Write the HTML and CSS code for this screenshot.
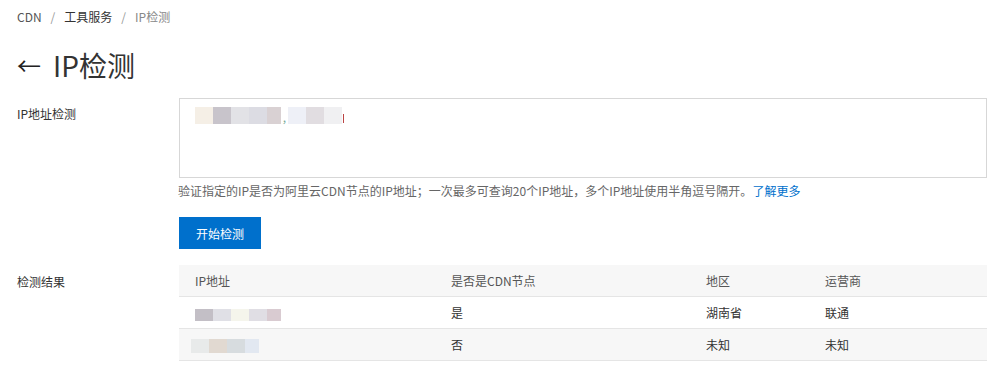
FILE: index.html
```html
<!DOCTYPE html>
<html>
<head>
  <meta charset="utf-8">
  <link rel="stylesheet" href="styles.css">
</head>
<body>
  <div class="page">
    <div class="breadcrumb">
      <span class="crumb">CDN</span>
      <span class="sep">/</span>
      <span class="crumb crumb-mid">工具服务</span>
      <span class="sep">/</span>
      <span class="crumb crumb-last">IP检测</span>
    </div>

    <h1 class="title"><span class="back">&#8592;</span>IP检测</h1>

    <div class="form-row">
      <div class="label label-input">IP地址检测</div>
      <div class="control">
        <div class="textarea">
          <span class="blur">
            <i style="background:#f5efe6"></i><i style="background:#c8c4cb"></i><i style="background:#e2e2e6"></i><i style="background:#dcdce3"></i><i class="narrow" style="background:#d9d1d3"></i>
          </span><span class="comma">,</span><span class="blur">
            <i style="background:#eef0f7"></i><i style="background:#e1dde1"></i><i style="background:#f0f0f2"></i>
          </span><span class="caret"></span>
        </div>
        <p class="help">验证指定的IP是否为阿里云CDN节点的IP地址；一次最多可查询20个IP地址，多个IP地址使用半角逗号隔开。<a href="#">了解更多</a></p>
        <button class="btn">开始检测</button>
      </div>
    </div>

    <div class="form-row">
      <div class="label label-table">检测结果</div>
      <div class="control">
        <table class="result">
          <thead>
            <tr>
              <th class="c1">IP地址</th>
              <th class="c2">是否是CDN节点</th>
              <th class="c3">地区</th>
              <th class="c4">运营商</th>
            </tr>
          </thead>
          <tbody>
            <tr>
              <td><span class="blur">
                <i style="background:#c3bfc6"></i><i style="background:#e0e0e6"></i><i style="background:#f5f5ec"></i><i style="background:#e0dee4"></i><i class="narrow" style="background:#d9cbd1"></i>
              </span></td>
              <td>是</td>
              <td>湖南省</td>
              <td>联通</td>
            </tr>
            <tr class="odd">
              <td><span class="blur shift">
                <i style="background:#e8eaea"></i><i style="background:#e1d9d1"></i><i style="background:#d7dcdf"></i><i class="narrow" style="background:#e2e8f1"></i>
              </span></td>
              <td>否</td>
              <td>未知</td>
              <td>未知</td>
            </tr>
          </tbody>
        </table>
      </div>
    </div>
  </div>
</body>
</html>
```

FILE: styles.css
```css
body {
  margin: 0;
  background: #fff;
  font-family: "Noto Sans CJK SC", "Noto Sans", sans-serif;
  font-size: 12px;
  color: #333;
}

.page {
  width: 987px;
  padding: 10px 0 0 17px;
  box-sizing: border-box;
}

.breadcrumb {
  display: flex;
  align-items: center;
  height: 14px;
  line-height: 14px;
}

.crumb {
  color: #555;
}

.crumb-mid {
  color: #333;
}

.crumb-last {
  color: #888;
}

.sep {
  color: #999;
  margin: 0 9px;
}

.title {
  margin: 21px 0 0;
  height: 40px;
  line-height: 40px;
  font-size: 28px;
  font-weight: normal;
  color: #333;
  display: flex;
  align-items: center;
}

.back {
  font-size: 24px;
  width: 36px;
  color: #222;
}

.form-row {
  display: flex;
  margin-top: 13px;
}

.form-row + .form-row {
  margin-top: 16px;
}

.label {
  width: 162px;
  flex: none;
  line-height: 16px;
  color: #333;
}

.label-input {
  padding-top: 8px;
}

.label-table {
  padding-top: 9px;
}

.control {
  flex: 1;
}

.textarea {
  height: 80px;
  box-sizing: border-box;
  border: 1px solid #d7d7d7;
  padding: 8px 0 0 15px;
  display: flex;
  align-items: flex-start;
}

.blur {
  display: inline-flex;
  height: 17px;
}

.blur i {
  width: 18px;
  height: 100%;
}

.blur i.narrow {
  width: 14px;
}

.comma {
  width: 7px;
  line-height: 20px;
  color: #7a9;
  text-align: center;
}

.caret {
  width: 1px;
  height: 9px;
  margin: 7px 0 0 1px;
  background: #b44;
}

.help {
  margin: 5px 0 0 -1px;
  line-height: 16px;
  color: #666;
}

.help a {
  color: #0070cc;
  text-decoration: none;
}

.btn {
  margin-top: 18px;
  width: 82px;
  height: 32px;
  border: none;
  background: #0070cc;
  color: #fff;
  font-family: inherit;
  font-size: 12px;
  padding: 0;
  display: block;
}

.result {
  width: 808px;
  border-collapse: collapse;
  table-layout: fixed;
}

.result th,
.result td {
  height: 31px;
  padding: 0 0 0 16px;
  text-align: left;
  border-bottom: 1px solid #e5e5e5;
  font-weight: normal;
}

.result th {
  background: #f7f7f7;
  color: #555;
}

.result td {
  color: #333;
}

.result .odd td {
  background: #f7f7f7;
}

.result td .blur {
  height: 12px;
  vertical-align: middle;
}

.result td .blur.shift {
  height: 14px;
  margin-left: -4px;
}

/* fixed layout: widths are content widths, the 16px left padding comes on top */
.c1 { width: 240px; }
.c2 { width: 239px; }
.c3 { width: 103px; }
.c4 { width: 162px; }
```
